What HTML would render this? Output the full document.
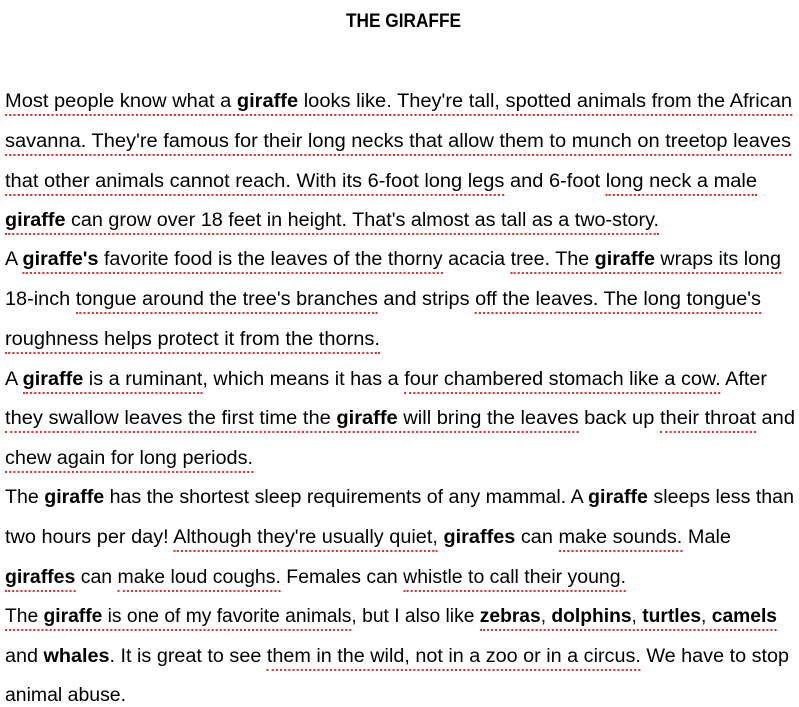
<!DOCTYPE html>
<html><head><meta charset="utf-8"><style>
body{margin:0;background:#fff;width:799px;height:705px;overflow:hidden;position:relative;font-family:"Liberation Sans",Arial,sans-serif;color:#000}
.l{position:absolute;left:5px;font-size:19px;line-height:22px;white-space:nowrap;transform-origin:0 0;margin-top:3px}
.s{border-bottom:2px dotted #e43030;padding-bottom:2px}
b{font-weight:bold}
</style></head><body>
<div class="l" id="t" style="top:8px;left:346px;font-weight:bold" data-w="115">THE GIRAFFE</div>
<div class="l" style="top:88px" data-w="787"><span class="s">Most people know what a <b>giraffe</b> looks like. They're tall, spotted animals from the African</span></div>
<div class="l" style="top:128px" data-w="786"><span class="s">savanna. They're famous for their long necks that allow them to munch on treetop leaves</span></div>
<div class="l" style="top:168px" data-w="752"><span class="s">that other animals cannot reach. With its 6-foot long legs</span> and 6-foot <span class="s">long neck a male</span></div>
<div class="l" style="top:207px" data-w="654"><span class="s"><b>giraffe</b> can grow over 18 feet in height. That's almost as tall as a two-story.</span></div>
<div class="l" style="top:246px" data-w="776">A <span class="s"><b>giraffe's</b> favorite food is the leaves of the thorny</span> acacia <span class="s">tree. The <b>giraffe</b> wraps its long</span></div>
<div class="l" style="top:286px" data-w="756">18-inch <span class="s">tongue around the tree's branches</span> and strips <span class="s">off the leaves. The long tongue's</span></div>
<div class="l" style="top:326px" data-w="375"><span class="s">roughness helps protect it from the thorns.</span></div>
<div class="l" style="top:366px" data-w="762">A <span class="s"><b>giraffe</b> is a ruminant</span>, which means it has a <span class="s">four chambered stomach like a cow.</span> After</div>
<div class="l" style="top:405px" data-w="790"><span class="s">they swallow leaves the first time the <b>giraffe</b> will bring the leaves</span> back up <span class="s">their throat</span> and</div>
<div class="l" style="top:445px" data-w="248"><span class="s">chew again for long periods.</span></div>
<div class="l" style="top:484px" data-w="789">The <b>giraffe</b> has the shortest sleep requirements of any mammal. A <b>giraffe</b> sleeps less than</div>
<div class="l" style="top:524px" data-w="726">two hours per day! <span class="s">Although they're usually quiet,</span> <b>giraffes</b> can <span class="s">make sounds.</span> Male</div>
<div class="l" style="top:564px" data-w="621"><span class="s"><b>giraffes</b></span> can <span class="s">make loud coughs.</span> Females can <span class="s">whistle to call their young.</span></div>
<div class="l" style="top:603px" data-w="772"><span class="s">The <b>giraffe</b> is one of my favorite animals</span>, but I also like <span class="s"><b>zebras</b>, <b>dolphins</b>, <b>turtles</b>, <b>camels</b></span></div>
<div class="l" style="top:643px" data-w="784">and <b>whales</b>. It is great to see <span class="s">them in the wild, not in a zoo or in a circus.</span> We have to stop</div>
<div class="l" style="top:682px" data-w="121">animal abuse.</div>
<script>
document.querySelectorAll('.l').forEach(function(e){var w=e.getBoundingClientRect().width;var t=+e.dataset.w;if(w>0)e.style.transform='scaleX('+(t/w)+')';});
</script>
</body></html>
